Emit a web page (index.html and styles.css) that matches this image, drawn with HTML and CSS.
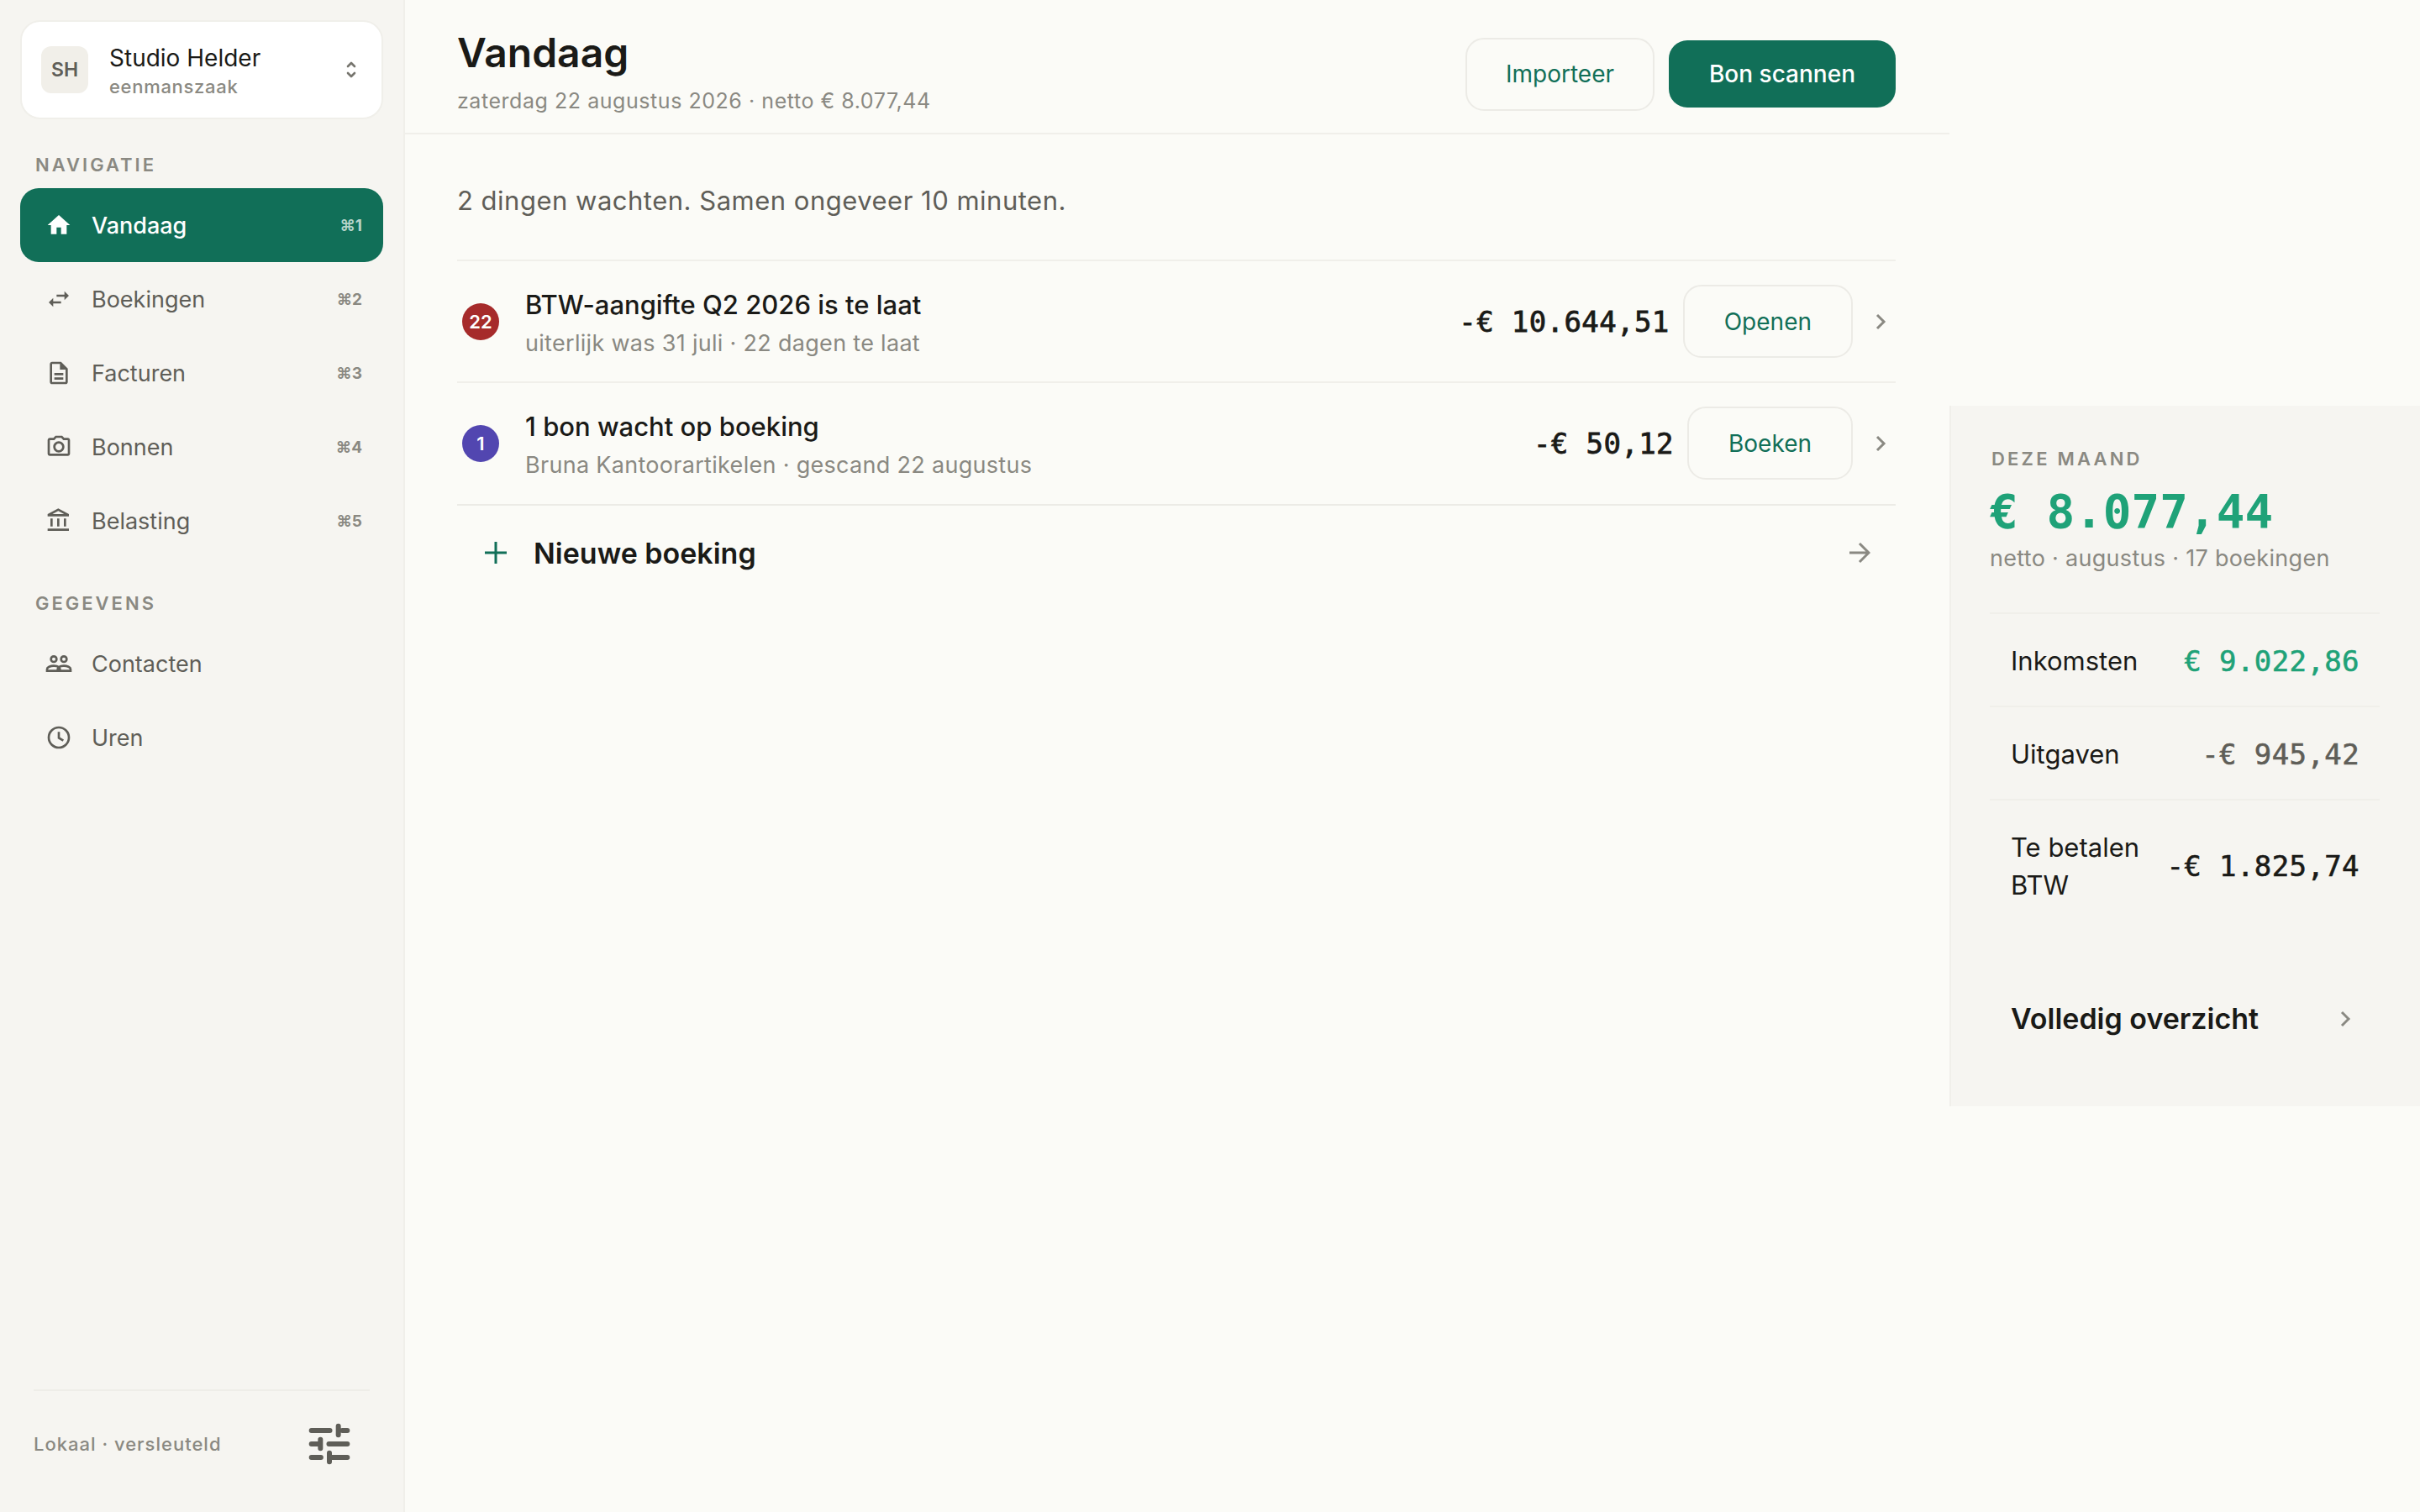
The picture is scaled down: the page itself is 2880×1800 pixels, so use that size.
FILE: index.html
```html
<!DOCTYPE html>
<html lang="nl">

<head>
    <title>Vandaag</title>
    <link rel="stylesheet" href="styles.css">
</head>

<body>
    <div class="app">
        <aside class="sidebar">
            <div class="org-card">
                <div class="org-avatar">SH</div>
                <div class="org-text">
                    <div class="org-name">Studio Helder</div>
                    <div class="org-type">eenmanszaak</div>
                </div>
                <svg class="org-switch" viewBox="0 0 12 22"><path d="M2 7l4-4 4 4M2 15l4 4 4-4"/></svg>
            </div>

            <div class="nav-label">NAVIGATIE</div>
            <nav class="nav-list">
                <a class="nav-item active">
                    <svg class="nav-icon" viewBox="0 0 24 24"><path d="M10 20v-6h4v6h5v-8h3L12 3 2 12h3v8z"/></svg>
                    <span class="nav-text">Vandaag</span>
                    <span class="nav-key">⌘1</span>
                </a>
                <a class="nav-item">
                    <svg class="nav-icon" viewBox="0 0 24 24"><path d="M6.99 11L3 15l3.99 4v-3H14v-2H6.99v-3zM21 9l-3.99-4v3H10v2h7.01v3L21 9z"/></svg>
                    <span class="nav-text">Boekingen</span>
                    <span class="nav-key">⌘2</span>
                </a>
                <a class="nav-item">
                    <svg class="nav-icon" viewBox="0 0 24 24"><path d="M8 16h8v2H8zm0-4h8v2H8zm6-10H6c-1.1 0-2 .9-2 2v16c0 1.1.89 2 1.99 2H18c1.1 0 2-.9 2-2V8l-6-6zm4 18H6V4h7v5h5v11z"/></svg>
                    <span class="nav-text">Facturen</span>
                    <span class="nav-key">⌘3</span>
                </a>
                <a class="nav-item">
                    <svg class="nav-icon" viewBox="0 0 24 24"><path d="M20 4h-3.17L15 2H9L7.17 4H4c-1.1 0-2 .9-2 2v12c0 1.1.9 2 2 2h16c1.1 0 2-.9 2-2V6c0-1.1-.9-2-2-2zm0 14H4V6h4.05l1.83-2h4.24l1.83 2H20v12zM12 7c-2.76 0-5 2.24-5 5s2.24 5 5 5 5-2.24 5-5-2.24-5-5-5zm0 8c-1.65 0-3-1.35-3-3s1.35-3 3-3 3 1.35 3 3-1.35 3-3 3z"/></svg>
                    <span class="nav-text">Bonnen</span>
                    <span class="nav-key">⌘4</span>
                </a>
                <a class="nav-item">
                    <svg class="nav-icon" viewBox="0 0 24 24"><path d="M6.5 10h-2v7h2v-7zm6 0h-2v7h2v-7zm8.500 9H2v2h19v-2zm-2.500-9h-2v7h2v-7zm-7-6.740L16.710 6H6.290l5.210-2.740m0-2.260L2 6v2h19V6l-9.500-5z"/></svg>
                    <span class="nav-text">Belasting</span>
                    <span class="nav-key">⌘5</span>
                </a>
            </nav>

            <div class="nav-label">GEGEVENS</div>
            <nav class="nav-list">
                <a class="nav-item">
                    <svg class="nav-icon line" viewBox="0 0 24 24"><circle cx="7.500" cy="8" r="2.500"/><circle cx="16.500" cy="8" r="2.500"/><path d="M1.500 18.500v-1.500c0-1.700 3-3 6-3 1.800 0 3.500.4 4.500 1.100 1-.7 2.700-1.100 4.500-1.100 3 0 6 1.300 6 3v1.500zM12 15.100c.6.500 1 1.100 1 1.900v1.500M12 15.100c-.6.500-1 1.100-1 1.900v1.500"/></svg>
                    <span class="nav-text">Contacten</span>
                </a>
                <a class="nav-item">
                    <svg class="nav-icon line" viewBox="0 0 24 24"><circle cx="12" cy="12" r="9"/><path d="M12 7v5.300l4 2.400"/></svg>
                    <span class="nav-text">Uren</span>
                </a>
            </nav>

            <div class="sidebar-footer">
                <span class="footer-text">Lokaal · versleuteld</span>
                <svg class="tune-icon" viewBox="0 0 24 24"><path d="M4 6h8.200M17.800 6H20M16 4v4M4 12h3M11.800 12H20M8 10v4M4 18h4.200M13 18h7M12 16v4"/></svg>
            </div>
        </aside>

        <div class="main-column">
            <header class="page-header">
                <div class="page-heading">
                    <h1 class="page-title">Vandaag</h1>
                    <div class="page-sub">zaterdag 22 augustus 2026 · netto € 8.077,44</div>
                </div>
                <div class="header-actions">
                    <button class="btn btn-outline">Importeer</button>
                    <button class="btn btn-primary">Bon scannen</button>
                </div>
            </header>

            <main class="content">
                <p class="summary">2 dingen wachten. Samen ongeveer 10 minuten.</p>

                <div class="task-row">
                    <span class="badge badge-red">22</span>
                    <div class="task-text">
                        <div class="task-title">BTW-aangifte Q2 2026 is te laat</div>
                        <div class="task-sub">uiterlijk was 31 juli · 22 dagen te laat</div>
                    </div>
                    <span class="task-amount">-€ 10.644,51</span>
                    <button class="btn btn-outline btn-row">Openen</button>
                    <svg class="chevron" viewBox="0 0 14 24"><path d="M3 4l8 8-8 8"/></svg>
                </div>

                <div class="task-row">
                    <span class="badge badge-purple">1</span>
                    <div class="task-text">
                        <div class="task-title">1 bon wacht op boeking</div>
                        <div class="task-sub">Bruna Kantoorartikelen · gescand 22 augustus</div>
                    </div>
                    <span class="task-amount">-€ 50,12</span>
                    <button class="btn btn-outline btn-row">Boeken</button>
                    <svg class="chevron" viewBox="0 0 14 24"><path d="M3 4l8 8-8 8"/></svg>
                </div>

                <div class="new-row">
                    <svg class="plus-icon" viewBox="0 0 28 28"><path d="M14 1v26M1 14h26"/></svg>
                    <span class="new-text">Nieuwe boeking</span>
                    <svg class="arrow-icon" viewBox="0 0 26 26"><path d="M1 13h23M13 2l11 11-11 11"/></svg>
                </div>
            </main>
        </div>

        <aside class="month-panel">
            <div class="month-label">DEZE MAAND</div>
            <div class="month-total">€ 8.077,44</div>
            <div class="month-sub">netto · augustus · 17 boekingen</div>

            <div class="stat-row">
                <span class="stat-name">Inkomsten</span>
                <span class="stat-value income">€ 9.022,86</span>
            </div>
            <div class="stat-row">
                <span class="stat-name">Uitgaven</span>
                <span class="stat-value expense">-€ 945,42</span>
            </div>
            <div class="stat-row">
                <span class="stat-name">Te betalen BTW</span>
                <span class="stat-value">-€ 1.825,74</span>
            </div>

            <div class="overview-link">
                <span>Volledig overzicht</span>
                <svg class="chevron" viewBox="0 0 14 24"><path d="M3 4l8 8-8 8"/></svg>
            </div>
        </aside>
    </div>
</body>

</html>
```

FILE: styles.css
```css
* {
    box-sizing: border-box;
}

html,
body {
    height: 100%;
}

body {
    margin: 0;
    background: #fbfbf7;
    color: #1a1a17;
    font-family: Inter, "Noto Sans", sans-serif;
}

.app {
    display: flex;
    height: 1800px;
    align-items: flex-start;
}

/* Sidebar */
.sidebar {
    display: flex;
    flex-direction: column;
    flex: none;
    width: 482px;
    height: 100%;
    padding: 24px 24px 0;
    background: #f6f5f1;
    border-right: 2px solid #f0efea;
}

.org-card {
    display: flex;
    align-items: center;
    height: 118px;
    padding: 0 24px 0 23px;
    background: #fff;
    border: 2px solid #f0efea;
    border-radius: 24px;
}

.org-avatar {
    display: flex;
    align-items: center;
    justify-content: center;
    flex: none;
    width: 56px;
    height: 56px;
    background: #f1efe9;
    border-radius: 12px;
    color: #5f5e58;
    font-size: 23px;
    font-weight: 600;
}

.org-text {
    flex: 1;
    margin-left: 25px;
    padding-top: 2px;
}

.org-name {
    font-size: 28px;
    line-height: 38px;
}

.org-type {
    color: #8a8982;
    font-size: 22px;
    font-weight: 500;
    letter-spacing: 0.7px;
    line-height: 30px;
}

.org-switch {
    width: 12px;
    height: 22px;
    margin-right: 6px;
    fill: none;
    stroke: #77766f;
    stroke-width: 2.600;
    stroke-linecap: round;
    stroke-linejoin: round;
}

.nav-label {
    margin: 38px 0 12px 18px;
    color: #8a8982;
    font-size: 22px;
    font-weight: 600;
    letter-spacing: 3px;
    line-height: 32px;
}

.nav-item {
    display: flex;
    align-items: center;
    height: 88px;
    padding: 0 25px 0 30px;
    border-radius: 22px;
    color: #5f5e58;
}

.nav-item.active {
    background: #116f58;
    color: #fff;
}

.nav-icon {
    flex: none;
    width: 32px;
    height: 32px;
    fill: currentColor;
}

.nav-icon.line {
    fill: none;
    stroke: currentColor;
    stroke-width: 2;
}

.nav-text {
    flex: 1;
    margin-left: 23px;
    font-size: 27px;
}

.nav-item.active .nav-text {
    font-weight: 500;
}

.nav-key {
    color: #8a8982;
    font-size: 19px;
    font-weight: 700;
}

.nav-item.active .nav-key {
    color: #b5d3ca;
}

.sidebar-footer {
    display: flex;
    align-items: center;
    justify-content: space-between;
    margin: auto 16px 0;
    padding: 31px 0 49px;
    border-top: 2px solid #eeede8;
}

.footer-text {
    color: #8a8982;
    font-size: 22px;
    font-weight: 500;
    letter-spacing: 1px;
}

.tune-icon {
    width: 64px;
    height: 64px;
    margin-right: 16px;
    fill: none;
    stroke: #5f5e58;
    stroke-width: 2.250;
    stroke-linecap: round;
}

/* Main column */
.main-column {
    flex: none;
    width: 1838px;
}

.page-header {
    display: flex;
    align-items: center;
    justify-content: space-between;
    height: 160px;
    padding: 18px 64px 0 62px;
    border-bottom: 2px solid #f0efea;
}

.page-heading {
    margin-bottom: 6px;
}

.page-title {
    margin: 0;
    font-size: 48px;
    font-weight: 600;
    line-height: 56px;
}

.page-sub {
    margin-top: 13px;
    color: #8a8982;
    font-size: 25px;
    letter-spacing: 0.55px;
    line-height: 32px;
}

.header-actions {
    display: flex;
    align-items: center;
    gap: 17px;
}

.btn {
    font-family: inherit;
    font-size: 28px;
    border-radius: 22px;
}

.btn-outline {
    width: 225px;
    height: 87px;
    background: transparent;
    border: 2px solid #ecebe6;
    color: #116f58;
}

.btn-primary {
    width: 270px;
    height: 80px;
    background: #116f58;
    border: 0;
    color: #fff;
    font-weight: 500;
}

.btn-row {
    width: auto;
    padding: 0 47px;
}

.content {
    padding: 55px 64px 0 62px;
}

.summary {
    margin: 0 0 46px;
    color: #5f5e58;
    font-size: 31px;
    letter-spacing: 0.5px;
    line-height: 48px;
}

.task-row {
    display: flex;
    align-items: center;
    height: 145px;
    border-top: 2px solid #f0efea;
}

.badge {
    display: flex;
    align-items: center;
    justify-content: center;
    flex: none;
    width: 44px;
    height: 44px;
    margin-left: 6px;
    border-radius: 50%;
    color: #fff;
    font-size: 22px;
    font-weight: 600;
}

.badge-red {
    background: #a62b2b;
}

.badge-purple {
    background: #5246b0;
}

.task-text {
    flex: 1;
    margin-left: 31px;
    padding-top: 6px;
}

.task-title {
    font-size: 31px;
    font-weight: 500;
    line-height: 46px;
}

.task-sub {
    color: #8a8982;
    font-size: 27px;
    letter-spacing: 0.3px;
    line-height: 46px;
}

.task-amount {
    margin-right: 16px;
    font-family: "DejaVu Sans Mono", monospace;
    font-size: 34px;
    letter-spacing: 0.4px;
    -webkit-text-stroke: 0.8px;
}

.task-row .chevron {
    margin: 0 11px 0 26px;
}

.chevron {
    flex: none;
    width: 14px;
    height: 24px;
    fill: none;
    stroke: #8a8982;
    stroke-width: 3;
}

.new-row {
    display: flex;
    align-items: center;
    height: 114px;
    margin-top: 1px;
    padding-left: 32px;
    border-top: 2px solid #ecebe6;
}

.plus-icon {
    width: 28px;
    height: 28px;
    fill: none;
    stroke: #116f58;
    stroke-width: 3;
}

.new-text {
    flex: 1;
    margin-left: 31px;
    font-size: 34px;
    font-weight: 600;
}

.arrow-icon {
    width: 26px;
    height: 26px;
    margin-right: 30px;
    fill: none;
    stroke: #8a8982;
    stroke-width: 3;
}

/* Right panel */
.month-panel {
    flex: 1;
    height: 834px;
    margin-top: 483px;
    padding: 48px 48px 0 46px;
    background: #f6f5f1;
    border-left: 2px solid #f0efea;
}

.month-label {
    padding-left: 2px;
    color: #8a8982;
    font-size: 22px;
    font-weight: 600;
    letter-spacing: 3.200px;
    line-height: 30px;
}

.month-total {
    margin-top: 10px;
    color: #1fa278;
    font-family: "DejaVu Sans Mono", monospace;
    font-size: 56px;
    font-weight: 700;
    line-height: 76px;
}

.month-sub {
    margin-bottom: 46px;
    color: #8a8982;
    font-size: 27px;
    letter-spacing: 0.3px;
    line-height: 36px;
}

.stat-row {
    display: flex;
    align-items: center;
    justify-content: space-between;
    gap: 24px;
    padding: 33px 24px 31px 25px;
    border-top: 2px solid #f0efea;
}

.stat-name {
    font-size: 31px;
    line-height: 45px;
}

.stat-value {
    flex: none;
    font-family: "DejaVu Sans Mono", monospace;
    font-size: 34px;
    letter-spacing: 0.4px;
    -webkit-text-stroke: 0.6px;
}

.stat-value.income {
    color: #1fa278;
}

.stat-value.expense {
    color: #5f5e58;
}

.overview-link {
    display: flex;
    align-items: center;
    justify-content: space-between;
    margin-top: 69px;
    padding: 0 34px 0 25px;
    font-size: 34px;
    font-weight: 600;
    line-height: 74px;
}
```
